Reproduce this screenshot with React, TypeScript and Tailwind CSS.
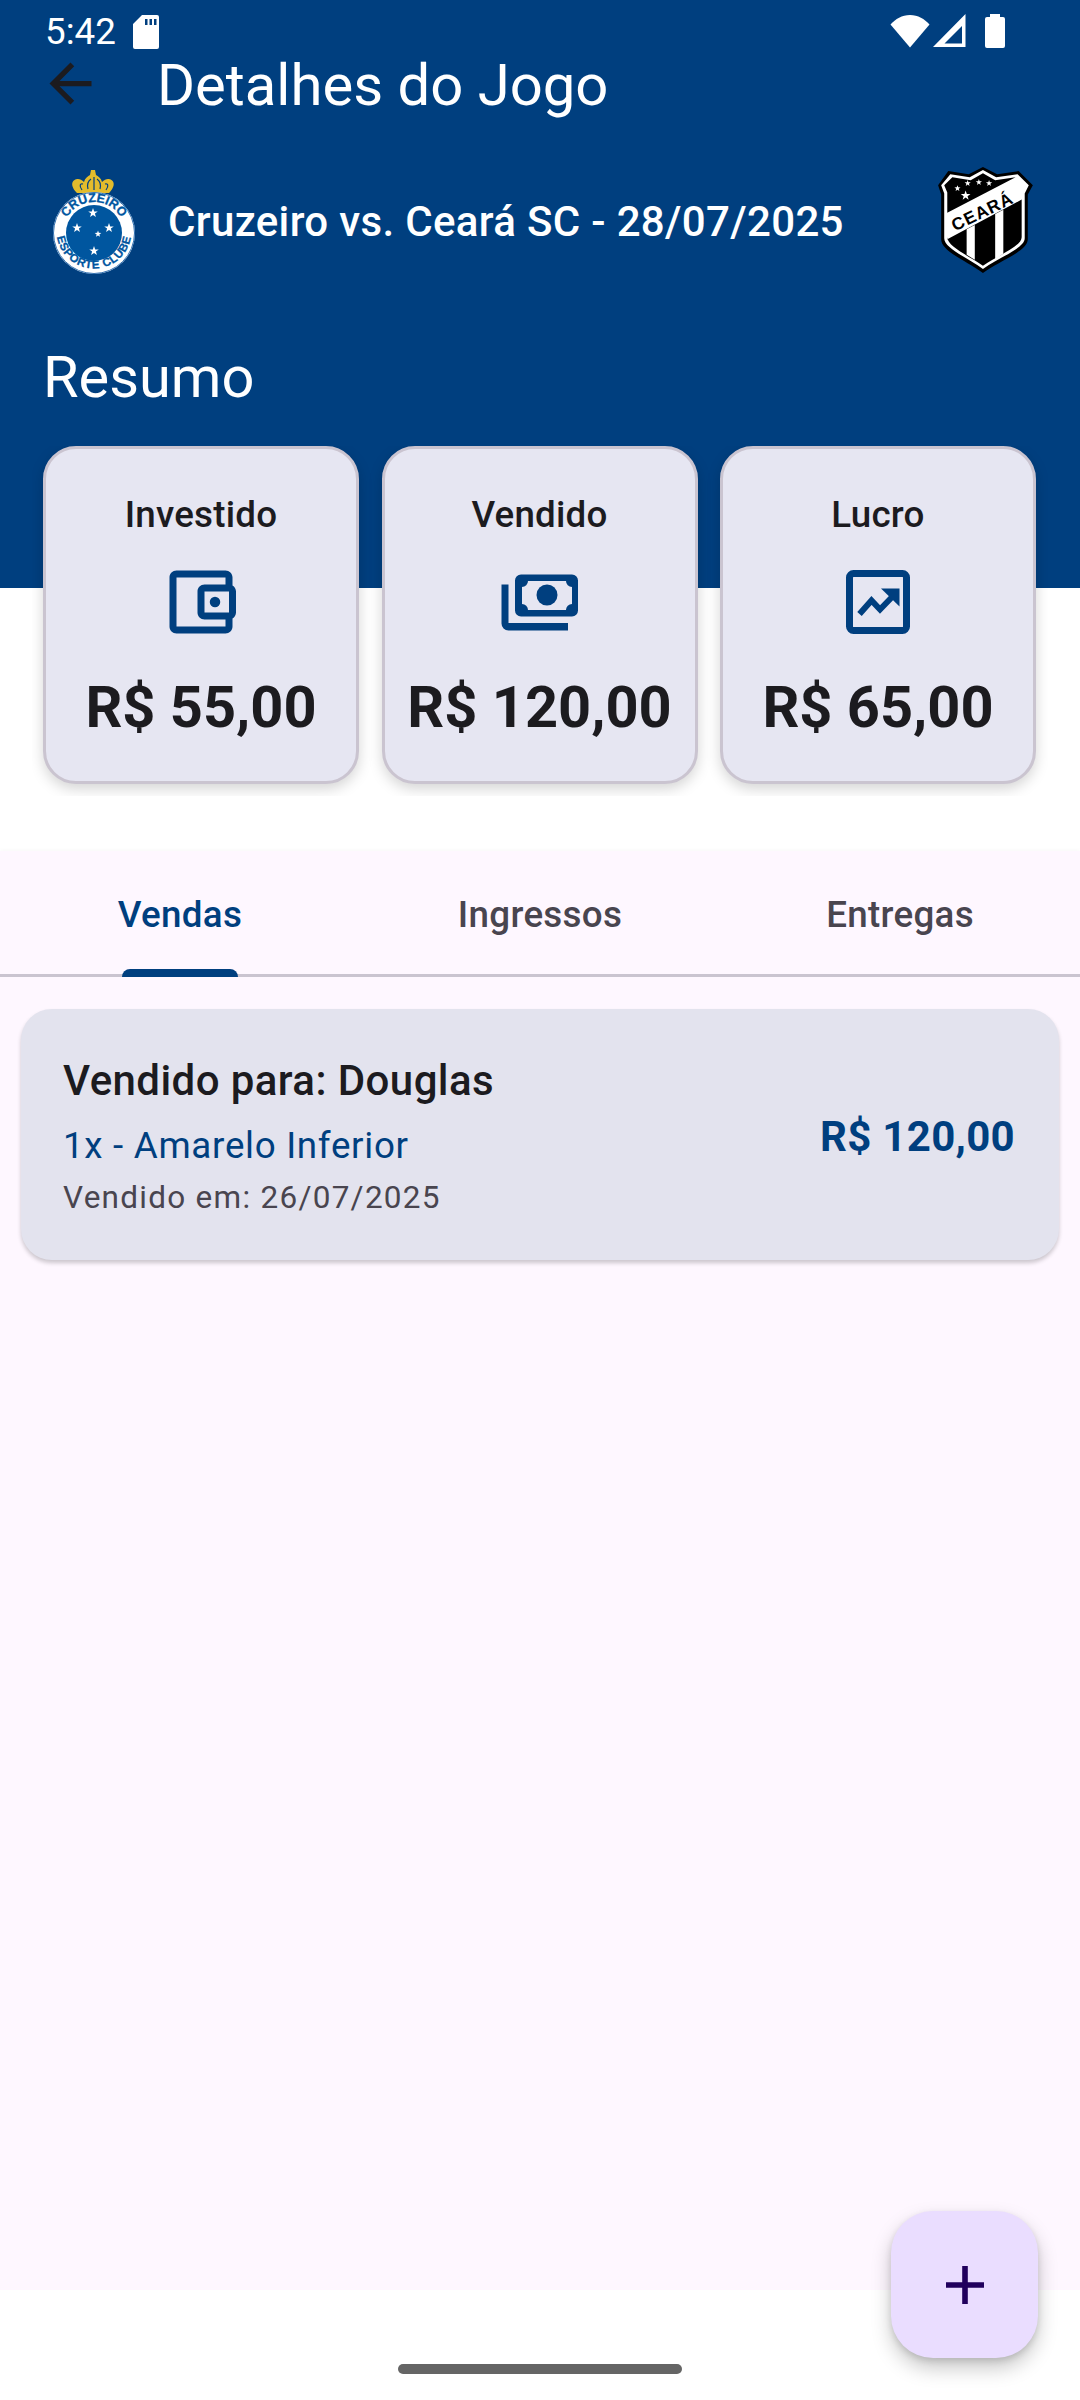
import React from "react";

const BLUE = "#003F7F";

function SdIcon() {
  return (
    <svg width="26" height="34" viewBox="0 0 26 34" className="mt-[1px] ml-[17px]">
      <path
        fillRule="evenodd"
        fill="#fff"
        d="M9 0H24a2 2 0 0 1 2 2V32a2 2 0 0 1-2 2H2a2 2 0 0 1-2-2V9ZM12 4v6h2.5V4ZM16.5 4v6H19V4ZM21 4v6h2.5V4Z"
      />
    </svg>
  );
}

function WifiIcon() {
  return (
    <svg width="40" height="34" viewBox="0 0 40 34">
      <path fill="#fff" d="M20 33.5 0.5 10.5C5.5 5 12 1 20 1s14.5 4 19.5 9.5Z" />
    </svg>
  );
}

function SignalIcon() {
  return (
    <svg width="33" height="34" viewBox="0 0 33 34">
      <path fillRule="evenodd" fill="#fff" d="M0 33 32.5 0V33ZM11.5 29.5H29V12Z" />
    </svg>
  );
}

function BatteryIcon() {
  return (
    <svg width="20" height="34" viewBox="0 0 20 34">
      <path fill="#fff" d="M5 0H15V3H18a2 2 0 0 1 2 2V32a2 2 0 0 1-2 2H2a2 2 0 0 1-2-2V5a2 2 0 0 1 2-2H5Z" />
    </svg>
  );
}

function Star({ x, y, r, fill = "#fff" }: { x: number; y: number; r: number; fill?: string }) {
  const pts: string[] = [];
  for (let i = 0; i < 10; i++) {
    const a = -Math.PI / 2 + (i * Math.PI) / 5;
    const q = i % 2 === 0 ? r : r * 0.4;
    pts.push(`${(x + q * Math.cos(a)).toFixed(2)},${(y + q * Math.sin(a)).toFixed(2)}`);
  }
  return <polygon points={pts.join(" ")} fill={fill} />;
}

function CruzeiroLogo() {
  return (
    <svg width="84" height="108" viewBox="0 -2 84 108">
      <path fill="#E3BC2C" d="M24 24c-7-8-3-13 2-13 2 0 4 1 6 3 1-4 4-6 6-7l1-5h4l1 5c2 1 5 3 6 7 2-2 4-3 6-3 5 0 9 5 2 13l-1 1H25Z" />
      <path d="M30 22c-3-4-2-7 1-6M54 22c3-4 2-7-1-6M42 9v13M36 21c-1-4 0-8 3-10M48 21c1-4 0-8-3-10" stroke={BLUE} strokeWidth="1.2" fill="none" />
      <circle cx="42" cy="65" r="41" fill="#fff" />
      <circle cx="42" cy="65" r="40.5" fill="none" stroke="#2F6FB0" strokeWidth="1" />
      <circle cx="42" cy="65" r="28" fill="#00569F" />
      <defs>
        <path id="cz-top" d="M11 65a31 31 0 0 1 62 0" />
        <path id="cz-bot" d="M4.5 63a37.5 37.5 0 0 0 75 0" />
      </defs>
      <text fontFamily="'Liberation Sans', sans-serif" fontWeight="700" fontSize="12.5" fill="#00569F" stroke="#00569F" strokeWidth="0.3" textAnchor="middle">
        <textPath href="#cz-top" startOffset="50%">CRUZEIRO</textPath>
      </text>
      <text fontFamily="'Liberation Sans', sans-serif" fontWeight="700" fontSize="11.5" fill="#00569F" stroke="#00569F" strokeWidth="0.3" letterSpacing="0.6" textAnchor="middle">
        <textPath href="#cz-bot" startOffset="50%">ESPORTE CLUBE</textPath>
      </text>
      <Star x={41} y={45} r={5} />
      <Star x={25} y={60} r={5} />
      <Star x={57} y={60} r={5} />
      <Star x={46} y={66} r={3.5} />
      <Star x={42} y={83} r={5} />
    </svg>
  );
}

function CearaLogo() {
  return (
    <svg width="96" height="108" viewBox="0 0 94 106">
      <path d="M44 1 58 8 79 5 93 19 88 28V72C88 84 60 93 44 105 28 93 3 84 3 72V28L0 19 10 5 30 8Z" fill="#000" />
      <path d="M44 4 57 11 78 8 89 19 85 27V71C85 81 59 90 44 101 29 90 6 81 6 71V27L3 19 12 8 31 11Z" fill="#fff" />
      <path d="M44 7 56 14 76 11 9 46V26L6 19 14 11 32 14Z" fill="#000" />
      <path d="M9 72 82 33V70C82 79 58 88 44 98 30 88 9 79 9 70Z" fill="#000" />
      <path d="M28 62 36 58V92L28 87ZM56 47 64 43V86L56 92Z" fill="#fff" />
      <Star x={19} y={22} r={3.2} />
      <Star x={29} y={17} r={3.2} />
      <Star x={40} y={16} r={3.2} />
      <Star x={50} y={17} r={3.2} />
      <Star x={27} y={29} r={5} />
      <text
        x="46"
        y="50"
        transform="rotate(-26 46 50)"
        textAnchor="middle"
        fontFamily="'Liberation Sans', sans-serif"
        fontWeight="700"
        fontSize="17"
        letterSpacing="1"
        fill="#000"
      >
        CEARÁ
      </text>
    </svg>
  );
}

function BackArrow() {
  return (
    <svg width="63" height="63" viewBox="0 0 24 24">
      <path fill="#1C1B1F" d="M20 11H7.83l5.59-5.59L12 4l-8 8 8 8 1.41-1.41L7.83 13H20v-2z" />
    </svg>
  );
}

function WalletIcon() {
  return (
    <svg width="84" height="84" viewBox="0 0 24 24">
      <path
        fill={BLUE}
        d="M21 7.28V5c0-1.1-.9-2-2-2H5c-1.11 0-2 .9-2 2v14c0 1.1.89 2 2 2h14c1.1 0 2-.9 2-2v-2.28c.59-.35 1-.98 1-1.72V9c0-.74-.41-1.37-1-1.72zM20 9v6h-7V9h7zM5 19V5h14v2h-6c-1.1 0-2 .9-2 2v6c0 1.1.9 2 2 2h6v2H5z"
      />
      <circle cx="16" cy="12" r="1.5" fill={BLUE} />
    </svg>
  );
}

function MoneyIcon() {
  return (
    <svg width="84" height="84" viewBox="0 0 84 84">
      <path fill={BLUE} d="M3.5 24.5H10.5V63H70V70.5H10.5a7 7 0 0 1-7-7Z" />
      <path
        fillRule="evenodd"
        fill={BLUE}
        d="M23 14.5H74a6 6 0 0 1 6 6V50.5a6 6 0 0 1-6 6H23a6 6 0 0 1-6-6V20.5a6 6 0 0 1 6-6ZM30 21a6 6 0 0 1-6 6V44a6 6 0 0 1 6 6H68a6 6 0 0 1 6-6V27a6 6 0 0 1-6-6Z"
      />
      <circle cx="49" cy="35" r="10.5" fill={BLUE} />
    </svg>
  );
}

function ChartIcon() {
  return (
    <svg width="84" height="84" viewBox="0 0 84 84">
      <rect x="13.5" y="13.5" width="57" height="57" rx="4" fill="none" stroke={BLUE} strokeWidth="7" />
      <path d="M23.5 54 35.5 40.5 44 49.5 58 35" fill="none" stroke={BLUE} strokeWidth="6" />
      <path d="M45 28.5H63.5V46.5Z" fill={BLUE} />
    </svg>
  );
}

function PlusIcon() {
  return (
    <svg width="38" height="38" viewBox="0 0 38 38">
      <path fill="#21005D" d="M16.2 0h5.6v16.2H38v5.6H21.8V38h-5.6V21.8H0v-5.6h16.2Z" />
    </svg>
  );
}

function SummaryCard({ label, value, icon }: { label: string; value: string; icon: React.ReactNode }) {
  return (
    <div className="box-border flex h-[338px] w-[316px] shrink-0 flex-col items-center rounded-[33px] border-[3px] border-[#CAC4D0] bg-[#E6E6F2] pt-[45px] shadow-[0_5px_14px_rgba(0,0,0,0.17)]">
      <div className="flex h-[42px] items-center text-[36.75px] leading-[42px] font-medium tracking-[0.22px] text-[#1C1B1F]">{label}</div>
      <div className="mt-[24px] h-[84px] w-[84px]">{icon}</div>
      <div className="mt-[29px] flex h-[68px] items-center whitespace-nowrap text-[57.75px] leading-[68px] font-bold text-[#1C1B1F]">{value}</div>
    </div>
  );
}

function Tab({ label, active }: { label: string; active?: boolean }) {
  return (
    <div className="relative flex flex-1 items-center justify-center pt-[5px]">
      <span className={active ? "text-[36.75px] font-medium tracking-[0.3px] text-[#003F7F]" : "text-[36.75px] font-medium tracking-[0.3px] text-[#49454F]"}>
        {label}
      </span>
      {active && <div className="absolute bottom-[-3px] left-[122px] h-[8px] w-[116px] rounded-t-[8px] bg-[#003F7F]" />}
    </div>
  );
}

export default function App() {
  return (
    <div className="relative flex h-[2400px] w-[1080px] flex-col overflow-hidden bg-white font-['Roboto',sans-serif]">
      <header className="flex h-[588px] flex-col bg-[#003F7F] text-white">
        <div className="flex h-[51px] items-start pr-[75px] pl-[45px] pt-[14px]">
          <div className="flex items-center">
            <span className="text-[36.75px] leading-[34px]">5:42</span>
            <SdIcon />
          </div>
          <div className="ml-auto flex items-start">
            <WifiIcon />
            <div className="ml-[3px]"><SignalIcon /></div>
            <div className="ml-[19px]"><BatteryIcon /></div>
          </div>
        </div>
        <div className="-mt-[2px] flex h-[72px] items-center pl-[39px]">
          <div className="-mt-[4px] h-[63px] w-[63px]"><BackArrow /></div>
          <h1 className="ml-[55px] text-[58px] leading-[72px] font-normal">Detalhes do Jogo</h1>
        </div>
        <div className="mt-[44px] flex h-[110px] items-center pr-[46px] pl-[52px]">
          <CruzeiroLogo />
          <span className="mt-[2px] ml-[32px] whitespace-nowrap text-[42px] font-medium tracking-[0.34px]">Cruzeiro vs. Ceará SC - 28/07/2025</span>
          <div className="ml-auto"><CearaLogo /></div>
        </div>
        <h2 className="mt-[66px] pl-[43px] text-[57.75px] leading-[72px] font-normal">Resumo</h2>
      </header>

      <div className="-mt-[142px] mr-[32px] ml-[32px] flex h-[350px] items-start gap-[22.5px] overflow-hidden px-[11px]">
        <SummaryCard label="Investido" value="R$ 55,00" icon={<WalletIcon />} />
        <SummaryCard label="Vendido" value="R$ 120,00" icon={<MoneyIcon />} />
        <SummaryCard label="Lucro" value="R$ 65,00" icon={<ChartIcon />} />
      </div>

      <main className="mt-[55px] flex h-[1439px] flex-col bg-[#FEF7FF] shadow-[0_-2px_3px_rgba(0,0,0,0.02)]">
        <nav className="box-border flex h-[126px] border-b-[3px] border-[#CAC4D0]">
          <Tab label="Vendas" active />
          <Tab label="Ingressos" />
          <Tab label="Entregas" />
        </nav>
        <article className="mt-[32px] mr-[21px] ml-[21px] flex h-[251px] items-center justify-between rounded-[31px] bg-[#E3E3EE] pr-[44px] pl-[42px] shadow-[0_3px_4px_rgba(0,0,0,0.2)]">
          <div className="flex flex-col self-start pt-[48px]">
            <div className="h-[48px] text-[42px] leading-[48px] font-medium tracking-[0.42px] text-[#1C1B1F]">Vendido para: Douglas</div>
            <div className="mt-[20px] h-[42px] text-[36.75px] leading-[42px] tracking-[0.7px] text-[#003F7F]">1x - Amarelo Inferior</div>
            <div className="mt-[13px] h-[36px] text-[31.5px] leading-[36px] tracking-[1.27px] text-[#49454F]">Vendido em: 26/07/2025</div>
          </div>
          <div className="mt-[3px] text-[42px] font-bold tracking-[0.3px] text-[#003F7F]">R$ 120,00</div>
        </article>
      </main>

      <footer className="flex flex-1 items-start justify-center pt-[74px]">
        <div className="h-[10px] w-[284px] rounded-full bg-[#656565]" />
      </footer>

      <button className="absolute top-[2211px] left-[891px] flex h-[147px] w-[147px] items-center justify-center rounded-[42px] bg-[#EADDFF] shadow-[0_10px_20px_rgba(0,0,0,0.22),0_3px_6px_rgba(0,0,0,0.12)]">
        <PlusIcon />
      </button>
    </div>
  );
}
